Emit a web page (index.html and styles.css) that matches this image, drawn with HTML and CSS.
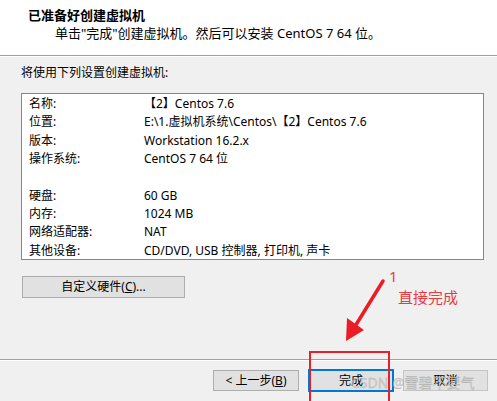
FILE: index.html
```html
<!DOCTYPE html>
<html lang="zh">
<head>
<meta charset="utf-8">
<link rel="stylesheet" href="styles.css">
</head>
<body>
<div class="wizard">
  <header class="head">
    <div class="title">已准备好创建虚拟机</div>
    <div class="subtitle">单击"完成"创建虚拟机。然后可以安装 CentOS 7 64 位。</div>
  </header>
  <main class="main">
    <div class="intro">将使用下列设置创建虚拟机:</div>
    <div class="summary">
      <div class="row"><span class="k">名称:</span><span class="v">【2】Centos 7.6</span></div>
      <div class="row"><span class="k">位置:</span><span class="v">E:\1.虚拟机系统\Centos\【2】Centos 7.6</span></div>
      <div class="row"><span class="k">版本:</span><span class="v">Workstation 16.2.x</span></div>
      <div class="row"><span class="k">操作系统:</span><span class="v">CentOS 7 64 位</span></div>
      <div class="row"></div>
      <div class="row"><span class="k">硬盘:</span><span class="v">60 GB</span></div>
      <div class="row"><span class="k">内存:</span><span class="v">1024 MB</span></div>
      <div class="row"><span class="k">网络适配器:</span><span class="v">NAT</span></div>
      <div class="row"><span class="k">其他设备:</span><span class="v">CD/DVD, USB 控制器, 打印机, 声卡</span></div>
    </div>
    <button class="btn custom">自定义硬件(<u>C</u>)...</button>
  </main>
  <footer class="foot">
    <button class="btn back">&lt; 上一步(<u>B</u>)</button>
    <button class="btn finish">完成</button>
    <button class="btn cancel">取消</button>
  </footer>
  <div class="watermark">CSDN @雪碧不要气</div>
  <div class="redbox"></div>
  <svg class="arrow" width="497" height="401" viewBox="0 0 497 401">
    <line x1="383" y1="281" x2="354" y2="328" stroke="#ea1c24" stroke-width="3.5" stroke-linecap="round"/>
    <polygon points="346,341 347,318 364,330" fill="#ea1c24"/>
  </svg>
  <div class="num">1</div>
  <div class="note">直接完成</div>
</div>
</body>
</html>
```

FILE: styles.css
```css
html, body {
  margin: 0;
  padding: 0;
  background: #f0f0f0;
}
.wizard {
  position: relative;
  width: 497px;
  height: 401px;
  overflow: hidden;
  font-family: "Noto Sans", "Noto Sans CJK SC", sans-serif;
  font-size: 12px;
  color: #000;
}
.head {
  height: 56px;
  background: #fff;
  border-bottom: 1px solid #a0a0a0;
  box-shadow: 0 1px 0 #fff;
  box-sizing: border-box;
  padding-top: 6px;
  font-size: 13px;
}
.title {
  font-weight: bold;
  padding-left: 28px;
  line-height: 18px;
}
.subtitle {
  padding-left: 55px;
  line-height: 18px;
}
.main {
  height: 304px;
  box-sizing: border-box;
  padding-top: 8px;
  border-bottom: 1px solid #a0a0a0;
  box-shadow: 0 1px 0 #fff;
}
.intro {
  padding-left: 21px;
  line-height: 18px;
}
.summary {
  margin: 11px 0 0 21px;
  width: 463px;
  height: 167px;
  box-sizing: border-box;
  border: 1px solid #828790;
  background: #fff;
  padding: 1px 0 0 7px;
}
.row {
  height: 18.33px;
  line-height: 18.33px;
  display: flex;
  white-space: nowrap;
}
.k {
  width: 115px;
}
.btn {
  font-family: inherit;
  font-size: 12px;
  background: #e1e1e1;
  border: 1px solid #adadad;
  color: #000;
  padding: 0;
  box-sizing: border-box;
  height: 22px;
  line-height: 18px;
}
.custom {
  display: block;
  margin: 16px 0 0 22px;
  width: 163px;
}
.foot {
  display: flex;
  padding: 10px 0 0 213px;
  gap: 9px;
}
.back {
  width: 86px;
  height: 21px;
}
.finish {
  width: 86px;
  border: 2px solid #0078d7;
  margin-top: -1px;
  height: 23px;
}
.cancel {
  width: 85px;
  height: 21px;
  border-color: #c4c4c4;
}
.watermark {
  position: absolute;
  left: 351px;
  top: 374px;
  font-size: 14px;
  line-height: 18px;
  color: rgba(205, 205, 205, 0.75);
  -webkit-text-stroke: 0.3px rgba(120, 120, 120, 0.5);
  white-space: nowrap;
}
.redbox {
  position: absolute;
  left: 309px;
  top: 351px;
  width: 77px;
  height: 50px;
  border: 2px solid #e8202a;
  border-bottom: none;
}
.arrow {
  position: absolute;
  left: 0;
  top: 0;
}
.num {
  position: absolute;
  left: 389px;
  top: 267px;
  color: #ea3a40;
  font-size: 15px;
  line-height: 18px;
}
.note {
  position: absolute;
  left: 398px;
  top: 288px;
  color: #ea3a40;
  font-size: 15px;
  line-height: 18px;
}
```
